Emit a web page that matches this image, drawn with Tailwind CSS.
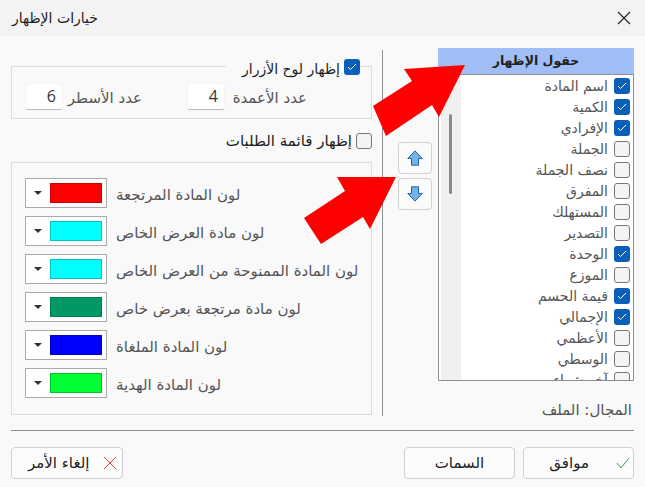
<!DOCTYPE html>
<html lang="ar">
<head>
    <meta charset="UTF-8">
    <title>خيارات الإظهار</title>
    <script src="https://cdn.jsdelivr.net/npm/@tailwindcss/browser@4"></script>
</head>
<body class="relative w-[645px] h-[487px] overflow-hidden bg-[#f9f9f9] font-['DejaVu_Sans',sans-serif] text-[14px] text-[#555]">
    <!-- title bar -->
    <div class="h-9 bg-[#f3f3f3] flex items-center justify-between pl-3 pr-3.5">
        <span dir="rtl" class="text-[14px] text-[#222]">خيارات الإظهار</span>
        <svg width="14" height="14" viewBox="0 0 14 14" fill="none" stroke="#222" stroke-width="1.1"><path d="M1 1l12 12M13 1L1 13"/></svg>
    </div>

    <div class="flex h-[394px] pt-3 pl-[11px] pr-[11px]">
        <!-- left column -->
        <div class="w-[361px] shrink-0 flex flex-col">
            <div class="relative mt-[18px] h-[53px] border border-[#dcdcdc] flex items-center pl-[14px]">
                <!-- legend -->
                <div class="absolute -top-[9px] right-[11px] pl-4 flex items-center gap-1 bg-[#f9f9f9] h-[18px]">
                    <span dir="rtl" class="pt-1 text-[#222]">إظهار لوح الأزرار</span>
                    <span class="w-4 h-4 rounded-[3px] bg-[#0a5fb8] flex items-center justify-center">
                        <svg width="10" height="8" viewBox="0 0 10 8" fill="none" stroke="#fff" stroke-width="1"><path d="M1 4l2.5 2.5L9 1"/></svg>
                    </span>
                </div>
                <div class="mt-2 flex items-center text-[15px]">
                    <span class="w-9 h-[26px] bg-white border-b border-[#bbb] rounded-[2px] shadow-[0_0_1px_#ccc] flex items-center justify-end pr-1.5 text-[#333] font-['Open_Sans',sans-serif] text-[16px]">6</span>
                    <span dir="rtl" class="ml-[2px] w-[78px] text-right pt-1 whitespace-nowrap">عدد الأسطر</span>
                    <span class="ml-[46px] w-9 h-[26px] bg-white border-b border-[#bbb] rounded-[2px] shadow-[0_0_1px_#ccc] flex items-center justify-end pr-1.5 text-[#333] font-['Open_Sans',sans-serif] text-[16px]">4</span>
                    <span dir="rtl" class="ml-[2px] w-[81px] text-right pt-1 whitespace-nowrap">عدد الأعمدة</span>
                </div>
            </div>

            <div class="mt-3.5 flex items-center justify-end gap-1 h-4">
                <span dir="rtl" class="text-[15px] text-[#222]">إظهار قائمة الطلبات</span>
                <span class="w-4 h-4 rounded-[3px] border border-[#777] bg-[#f4f4f4]"></span>
            </div>

            <div class="mt-[13px] h-[253px] border border-[#dcdcdc] pl-[13px] pt-[15px] flex flex-col gap-2 text-[15px]">
                <div class="flex items-center gap-[9px]">
                    <div class="w-[82px] h-[30px] bg-white border border-[#aaa] flex items-center pl-2 gap-[8px]">
                        <span class="w-0 h-0 border-x-[4px] border-x-transparent border-t-[4px] border-t-[#333]"></span>
                        <span class="w-[52px] h-5 bg-[#ff0000] border border-[#cc0000]"></span>
                    </div>
                    <span dir="rtl" class="pt-1">لون المادة المرتجعة</span>
                </div>
                <div class="flex items-center gap-[9px]">
                    <div class="w-[82px] h-[30px] bg-white border border-[#aaa] flex items-center pl-2 gap-[8px]">
                        <span class="w-0 h-0 border-x-[4px] border-x-transparent border-t-[4px] border-t-[#333]"></span>
                        <span class="w-[52px] h-5 bg-[#00ffff] border border-[#00c4c4]"></span>
                    </div>
                    <span dir="rtl" class="pt-1">لون مادة العرض الخاص</span>
                </div>
                <div class="flex items-center gap-[9px]">
                    <div class="w-[82px] h-[30px] bg-white border border-[#aaa] flex items-center pl-2 gap-[8px]">
                        <span class="w-0 h-0 border-x-[4px] border-x-transparent border-t-[4px] border-t-[#333]"></span>
                        <span class="w-[52px] h-5 bg-[#00ffff] border border-[#00c4c4]"></span>
                    </div>
                    <span dir="rtl" class="pt-1">لون المادة الممنوحة من العرض الخاص</span>
                </div>
                <div class="flex items-center gap-[9px]">
                    <div class="w-[82px] h-[30px] bg-white border border-[#aaa] flex items-center pl-2 gap-[8px]">
                        <span class="w-0 h-0 border-x-[4px] border-x-transparent border-t-[4px] border-t-[#333]"></span>
                        <span class="w-[52px] h-5 bg-[#009966] border border-[#007a52]"></span>
                    </div>
                    <span dir="rtl" class="pt-1">لون مادة مرتجعة بعرض خاص</span>
                </div>
                <div class="flex items-center gap-[9px]">
                    <div class="w-[82px] h-[30px] bg-white border border-[#aaa] flex items-center pl-2 gap-[8px]">
                        <span class="w-0 h-0 border-x-[4px] border-x-transparent border-t-[4px] border-t-[#333]"></span>
                        <span class="w-[52px] h-5 bg-[#0000ff] border border-[#0000cc]"></span>
                    </div>
                    <span dir="rtl" class="pt-1">لون المادة الملغاة</span>
                </div>
                <div class="flex items-center gap-[9px]">
                    <div class="w-[82px] h-[30px] bg-white border border-[#aaa] flex items-center pl-2 gap-[8px]">
                        <span class="w-0 h-0 border-x-[4px] border-x-transparent border-t-[4px] border-t-[#333]"></span>
                        <span class="w-[52px] h-5 bg-[#00ff33] border border-[#00c428]"></span>
                    </div>
                    <span dir="rtl" class="pt-1">لون المادة الهدية</span>
                </div>
            </div>
        </div>

        <!-- divider -->
        <div class="ml-2.5 mt-0.5 w-px h-[366px] bg-[#8f8f96] shrink-0"></div>

        <!-- move buttons -->
        <div class="ml-[15px] w-[34px] shrink-0 pt-[94px] flex flex-col gap-1">
            <button class="h-8 bg-[#fbfbfb] border border-[#d0d0d0] rounded flex items-center justify-center">
                <svg width="16" height="16" viewBox="0 0 16 16"><path d="M8 .8L15.2 8.5H11.5V15.2H4.5V8.5H.8Z" fill="#73b2ea" stroke="#1a66b0"/></svg>
            </button>
            <button class="h-8 bg-[#fbfbfb] border border-[#d0d0d0] rounded flex items-center justify-center">
                <svg width="16" height="16" viewBox="0 0 16 16"><path d="M8 15.2L15.2 7.5H11.5V.8H4.5V7.5H.8Z" fill="#73b2ea" stroke="#1a66b0"/></svg>
            </button>
        </div>

        <!-- fields list -->
        <div class="ml-1.5 w-[196px] shrink-0">
            <div class="h-[26px] bg-[#a0bef5] flex items-center justify-center">
                <span dir="rtl" class="font-bold text-[12.5px] text-[#222]">حقول الإظهار</span>
            </div>
            <div class="h-[307px] border border-[#8f8f96] bg-white pl-0.5 flex overflow-hidden">
                <div class="w-5 shrink-0 h-[305px] bg-[#f0f0f0] pl-2 pt-[39px]">
                    <div class="w-[3px] h-[80px] bg-[#8a8a8a] rounded-full"></div>
                </div>
                <div class="flex-1 pr-[3px] pt-[0.5px] flex flex-col overflow-hidden">
                    <div class="h-[21px] shrink-0 flex items-center justify-end gap-1.5"><span dir="rtl">اسم المادة</span><span class="w-4 h-4 rounded-[3px] bg-[#0a5fb8] flex items-center justify-center"><svg width="10" height="8" viewBox="0 0 10 8" fill="none" stroke="#fff" stroke-width="1"><path d="M1 4l2.5 2.5L9 1"/></svg></span></div>
                    <div class="h-[21px] shrink-0 flex items-center justify-end gap-1.5"><span dir="rtl">الكمية</span><span class="w-4 h-4 rounded-[3px] bg-[#0a5fb8] flex items-center justify-center"><svg width="10" height="8" viewBox="0 0 10 8" fill="none" stroke="#fff" stroke-width="1"><path d="M1 4l2.5 2.5L9 1"/></svg></span></div>
                    <div class="h-[21px] shrink-0 flex items-center justify-end gap-1.5"><span dir="rtl">الإفرادي</span><span class="w-4 h-4 rounded-[3px] bg-[#0a5fb8] flex items-center justify-center"><svg width="10" height="8" viewBox="0 0 10 8" fill="none" stroke="#fff" stroke-width="1"><path d="M1 4l2.5 2.5L9 1"/></svg></span></div>
                    <div class="h-[21px] shrink-0 flex items-center justify-end gap-1.5"><span dir="rtl">الجملة</span><span class="w-4 h-4 rounded-[3px] border border-[#777] bg-[#f4f4f4]"></span></div>
                    <div class="h-[21px] shrink-0 flex items-center justify-end gap-1.5"><span dir="rtl">نصف الجملة</span><span class="w-4 h-4 rounded-[3px] border border-[#777] bg-[#f4f4f4]"></span></div>
                    <div class="h-[21px] shrink-0 flex items-center justify-end gap-1.5"><span dir="rtl">المفرق</span><span class="w-4 h-4 rounded-[3px] border border-[#777] bg-[#f4f4f4]"></span></div>
                    <div class="h-[21px] shrink-0 flex items-center justify-end gap-1.5"><span dir="rtl">المستهلك</span><span class="w-4 h-4 rounded-[3px] border border-[#777] bg-[#f4f4f4]"></span></div>
                    <div class="h-[21px] shrink-0 flex items-center justify-end gap-1.5"><span dir="rtl">التصدير</span><span class="w-4 h-4 rounded-[3px] border border-[#777] bg-[#f4f4f4]"></span></div>
                    <div class="h-[21px] shrink-0 flex items-center justify-end gap-1.5"><span dir="rtl">الوحدة</span><span class="w-4 h-4 rounded-[3px] bg-[#0a5fb8] flex items-center justify-center"><svg width="10" height="8" viewBox="0 0 10 8" fill="none" stroke="#fff" stroke-width="1"><path d="M1 4l2.5 2.5L9 1"/></svg></span></div>
                    <div class="h-[21px] shrink-0 flex items-center justify-end gap-1.5"><span dir="rtl">الموزع</span><span class="w-4 h-4 rounded-[3px] border border-[#777] bg-[#f4f4f4]"></span></div>
                    <div class="h-[21px] shrink-0 flex items-center justify-end gap-1.5"><span dir="rtl">قيمة الحسم</span><span class="w-4 h-4 rounded-[3px] bg-[#0a5fb8] flex items-center justify-center"><svg width="10" height="8" viewBox="0 0 10 8" fill="none" stroke="#fff" stroke-width="1"><path d="M1 4l2.5 2.5L9 1"/></svg></span></div>
                    <div class="h-[21px] shrink-0 flex items-center justify-end gap-1.5"><span dir="rtl">الإجمالي</span><span class="w-4 h-4 rounded-[3px] bg-[#0a5fb8] flex items-center justify-center"><svg width="10" height="8" viewBox="0 0 10 8" fill="none" stroke="#fff" stroke-width="1"><path d="M1 4l2.5 2.5L9 1"/></svg></span></div>
                    <div class="h-[21px] shrink-0 flex items-center justify-end gap-1.5"><span dir="rtl">الأعظمي</span><span class="w-4 h-4 rounded-[3px] border border-[#777] bg-[#f4f4f4]"></span></div>
                    <div class="h-[21px] shrink-0 flex items-center justify-end gap-1.5"><span dir="rtl">الوسطي</span><span class="w-4 h-4 rounded-[3px] border border-[#777] bg-[#f4f4f4]"></span></div>
                    <div class="h-[21px] shrink-0 flex items-center justify-end gap-1.5"><span dir="rtl">آخر شراء</span><span class="w-4 h-4 rounded-[3px] border border-[#777] bg-[#f4f4f4]"></span></div>
                </div>
            </div>
            <div dir="rtl" class="mt-[18px] pr-0.5 text-[15px] text-[#555]">المجال: الملف</div>
        </div>
    </div>

    <div class="mx-[11px] h-px bg-[#8f8f96]"></div>

    <!-- footer buttons -->
    <div class="mt-4 px-[11px] flex">
        <button class="w-28 h-8 bg-[#fcfcfc] border border-[#d0d0d0] rounded flex items-center pl-4 gap-3.5">
            <span dir="rtl" class="text-[15px] text-[#222]">إلغاء الأمر</span>
            <svg width="14" height="14" viewBox="0 0 14 14" fill="none" stroke="#e0443e" stroke-width="1"><path d="M1 1l12 12M13 1L1 13"/></svg>
        </button>
        <button class="ml-auto w-[111px] h-8 bg-[#fcfcfc] border border-[#d0d0d0] rounded text-[#222]">
            <span dir="rtl" class="text-[15px]">السمات</span>
        </button>
        <button class="ml-2 w-[111px] h-8 bg-[#fcfcfc] border border-[#d0d0d0] rounded flex items-center justify-end gap-[27px] pr-[3px] text-[#222]">
            <span dir="rtl" class="text-[15px]">موافق</span>
            <svg width="14" height="12" viewBox="0 0 14 12" fill="none" stroke="#3e9a56" stroke-width="1"><path d="M1 6l4 5 8-10"/></svg>
        </button>
    </div>

    <!-- red annotation arrows drawn on top of the dialog -->
    <svg class="absolute inset-0 pointer-events-none" width="645" height="487" viewBox="0 0 645 487" fill="#ff0000">
        <polygon points="396,177 337,177 345,191 304,218 321,244 363,217 370,229"/>
        <polygon points="465,65 404,69 412,81 373,106 386,136 432,105 439,117"/>
    </svg>
</body>
</html>
